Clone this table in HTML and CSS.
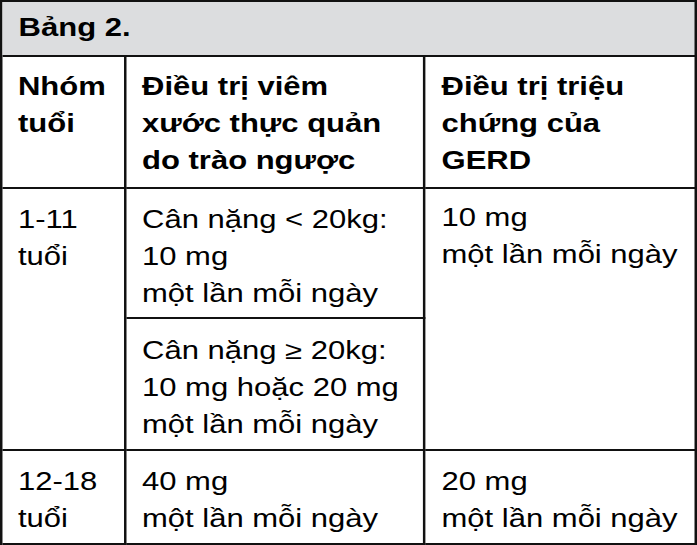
FILE: index.html
```html
<!DOCTYPE html>
<html lang="vi">
<head>
<meta charset="utf-8">
<title>Bảng 2.</title>
<link rel="stylesheet" href="styles.css">
</head>
<body>
<div class="sheet">
  <div class="cell title">Bảng 2.</div>

  <div class="cell head c1">Nhóm<br>tuổi</div>
  <div class="cell head c2">Điều trị viêm<br>xước thực quản<br>do trào ngược</div>
  <div class="cell head c3">Điều trị triệu<br>chứng của<br>GERD</div>

  <div class="cell c1 span2">1-11<br>tuổi</div>
  <div class="cell c2 sub1">Cân nặng &lt; 20kg:<br>10 mg<br>một lần mỗi ngày</div>
  <div class="cell c3 span2 r1c3">10 mg<br>một lần mỗi ngày</div>
  <div class="cell c2 sub2">Cân nặng ≥ 20kg:<br>10 mg hoặc 20 mg<br>một lần mỗi ngày</div>

  <div class="cell c1 last">12-18<br>tuổi</div>
  <div class="cell c2 last">40 mg<br>một lần mỗi ngày</div>
  <div class="cell c3 last">20 mg<br>một lần mỗi ngày</div>
</div>
</body>
</html>
```

FILE: styles.css
```css
html, body {
  margin: 0;
  padding: 0;
  background: #ffffff;
}

.sheet {
  width: 562px;
  box-sizing: border-box;
  display: grid;
  grid-template-columns: 100px 241px 219px;
  grid-template-rows: 55px 132px 130px 132px 94px;
  border-top: 2px solid #111;
  border-left: 2px solid #111;
  transform: scaleX(1.2402);
  transform-origin: 0 0;
  font-family: "Liberation Sans", Arial, sans-serif;
  font-size: 25px;
  line-height: 37px;
  color: #000;
}

.cell {
  box-sizing: border-box;
  border-right: 2px solid #111;
  border-bottom: 2px solid #111;
  padding: 12px 4px 0 12.5px;
  white-space: nowrap;
}

.title {
  grid-column: 1 / 4;
  background: #dcdddf;
  font-weight: bold;
  padding-top: 7px;
  padding-left: 13px;
}

.head {
  font-weight: bold;
  padding-top: 11px;
}

.c1 { grid-column: 1; padding-left: 12.5px; }
.c2 { grid-column: 2; }
.c3 { grid-column: 3; padding-left: 13px; }

.span2 { grid-row: 3 / 5; }
.sub1 { grid-row: 3; }
.sub2 { grid-row: 4; padding-top: 13px; }
.r1c3 { padding-top: 10px; }
.last { grid-row: 5; }
```
